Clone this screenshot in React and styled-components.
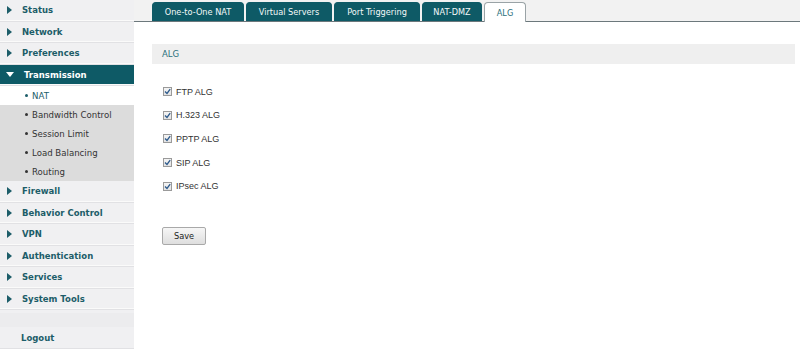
import React from 'react';
import styled, { createGlobalStyle } from 'styled-components';

const GlobalStyle = createGlobalStyle`
  html, body {
    margin: 0;
    padding: 0;
    background: #ffffff;
  }
  body {
    font-family: "DejaVu Sans", Verdana, sans-serif;
  }
`;

const Page = styled.div`
  display: flex;
  width: 800px;
  height: 349px;
  overflow: hidden;
`;

const Sidebar = styled.nav`
  width: 134px;
  flex-shrink: 0;
  background: #f0f0f2;
  display: flex;
  flex-direction: column;
`;

const MenuItem = styled.div`
  flex-shrink: 0;
  height: 20.5px;
  display: flex;
  align-items: center;
  padding-left: 7px;
  gap: 10px;
  font-size: 8.5px;
  font-weight: bold;
  color: ${(p) => (p.active ? '#ffffff' : '#1c5d69')};
  background: ${(p) => (p.active ? '#0e5a66' : '#f0f0f2')};
  border-bottom: 1px solid #e1e1e4;
  box-shadow: inset 0 -1px 0 #fafafa;
`;

const Arrow = styled.span`
  width: 0;
  height: 0;
  ${(p) =>
    p.open
      ? `border-left: 4px solid transparent;
         border-right: 4px solid transparent;
         border-top: 5px solid #ffffff;
         margin-left: -1px;`
      : `border-top: 4px solid transparent;
         border-bottom: 4px solid transparent;
         border-left: 5px solid #1c5d69;`}
`;

const SubItem = styled.div`
  flex-shrink: 0;
  height: 19px;
  display: flex;
  align-items: center;
  padding-left: 25px;
  gap: 4px;
  font-size: 8.6px;
  color: ${(p) => (p.active ? '#1c5d69' : '#333333')};
  background: ${(p) => (p.active ? '#ffffff' : '#dcdcdc')};
  &::before {
    content: '';
    width: 3px;
    height: 3px;
    border-radius: 50%;
    background: ${(p) => (p.active ? '#1c5d69' : '#333333')};
  }
`;

const Spacer = styled.div`
  flex-shrink: 0;
  height: 14px;
  margin-top: 3px;
  background: #ececee;
`;

const Logout = styled.div`
  flex-shrink: 0;
  height: 20px;
  margin-top: 1px;
  display: flex;
  align-items: center;
  padding-left: 21px;
  font-size: 8.5px;
  font-weight: bold;
  color: #1c5d69;
  border-bottom: 1px solid #e1e1e4;
`;

const Main = styled.main`
  flex: 1;
  display: flex;
  flex-direction: column;
`;

const TabBar = styled.div`
  height: 21px;
  flex-shrink: 0;
  background: #f2f2f2;
  border-bottom: 1px solid #6c787c;
  display: flex;
  align-items: flex-end;
  gap: 2px;
  padding-left: 18px;
`;

const Tab = styled.div`
  width: ${(p) => p.w}px;
  box-sizing: border-box;
  display: flex;
  align-items: center;
  justify-content: center;
  font-size: 8.2px;
  border-radius: 4px 4px 0 0;
  color: ${(p) => (p.active ? '#2a6f7c' : '#f4f8f8')};
  background: ${(p) => (p.active ? '#ffffff' : '#0e5a66')};
  border: 1px solid ${(p) => (p.active ? '#9aa3a6' : '#0e5a66')};
  border-bottom: none;
  margin-bottom: ${(p) => (p.active ? '-1px' : '0')};
  height: ${(p) => (p.active ? '20px' : '19px')};
`;

const Content = styled.div`
  padding: 22px 5px 0 18px;
`;

const SectionHead = styled.div`
  height: 20px;
  display: flex;
  align-items: center;
  padding-left: 10px;
  background: #efefef;
  font-size: 8.5px;
  color: #2a6f7c;
`;

const OptionList = styled.div`
  display: flex;
  flex-direction: column;
  gap: 12.7px;
  padding: 22px 0 0 11px;
`;

const Option = styled.label`
  display: flex;
  align-items: center;
  gap: 4px;
  height: 11px;
  font-family: "Liberation Sans", Arial, sans-serif;
  font-size: 9px;
  color: #333333;
`;

const Box = styled.span`
  width: 9px;
  height: 9px;
  box-sizing: border-box;
  border: 1px solid #9a9a9a;
  background: linear-gradient(#f4f4f4, #e4e4e4);
  display: flex;
  align-items: center;
  justify-content: center;
`;

const SaveButton = styled.button`
  display: block;
  margin: 35px 0 0 10px;
  width: 44px;
  height: 18px;
  padding: 0;
  font-family: "DejaVu Sans", Verdana, sans-serif;
  font-size: 8.2px;
  color: #222222;
  background: linear-gradient(#f6f6f6, #dedede);
  border: 1px solid #a9a9a9;
  border-radius: 2px;
`;

const Check = () => (
  <svg width="7" height="7" viewBox="0 0 7 7">
    <path d="M1 3.5 L3 5.5 L6.2 1.2" fill="none" stroke="#2d5a8c" strokeWidth="1.3" />
  </svg>
);

const menu = ['Status', 'Network', 'Preferences'];
const subMenu = ['NAT', 'Bandwidth Control', 'Session Limit', 'Load Balancing', 'Routing'];
const menuAfter = ['Firewall', 'Behavior Control', 'VPN', 'Authentication', 'Services', 'System Tools'];
const tabs = [
  { label: 'One-to-One NAT', w: 92 },
  { label: 'Virtual Servers', w: 86 },
  { label: 'Port Triggering', w: 86 },
  { label: 'NAT-DMZ', w: 60 },
  { label: 'ALG', w: 42, active: true },
];
const options = ['FTP ALG', 'H.323 ALG', 'PPTP ALG', 'SIP ALG', 'IPsec ALG'];

const App = function () {
  return (
    <Page>
      <GlobalStyle />
      <Sidebar>
        {menu.map((m) => (
          <MenuItem key={m}>
            <Arrow />
            {m}
          </MenuItem>
        ))}
        <MenuItem active>
          <Arrow open />
          Transmission
        </MenuItem>
        {subMenu.map((s, i) => (
          <SubItem key={s} active={i === 0}>
            {s}
          </SubItem>
        ))}
        {menuAfter.map((m) => (
          <MenuItem key={m}>
            <Arrow />
            {m}
          </MenuItem>
        ))}
        <Spacer />
        <Logout>Logout</Logout>
      </Sidebar>
      <Main>
        <TabBar>
          {tabs.map((t) => (
            <Tab key={t.label} active={t.active} w={t.w}>
              {t.label}
            </Tab>
          ))}
        </TabBar>
        <Content>
          <SectionHead>ALG</SectionHead>
          <OptionList>
            {options.map((o) => (
              <Option key={o}>
                <Box>
                  <Check />
                </Box>
                {o}
              </Option>
            ))}
          </OptionList>
          <SaveButton>Save</SaveButton>
        </Content>
      </Main>
    </Page>
  );
};

export default App;
